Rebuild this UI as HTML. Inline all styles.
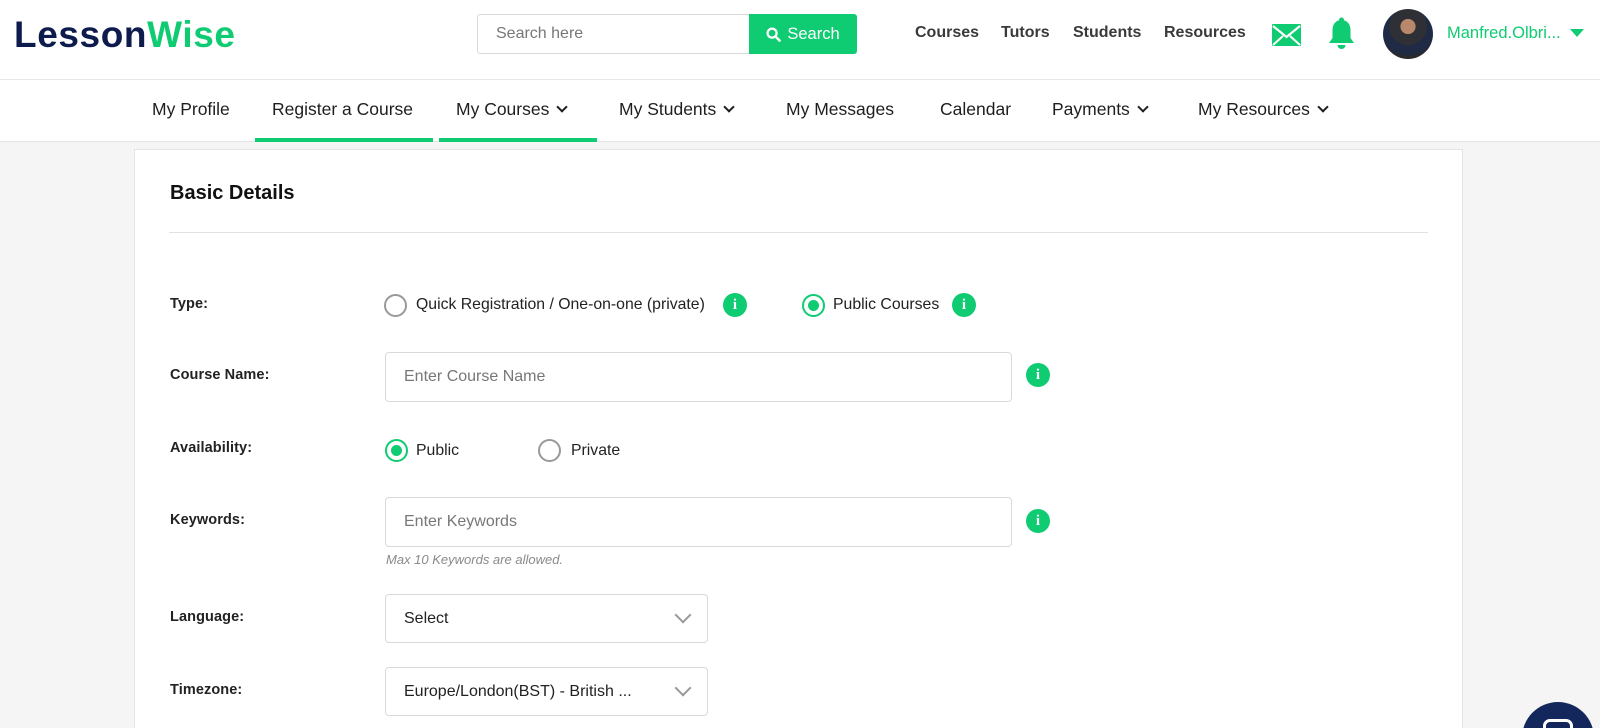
<!DOCTYPE html>
<html style="width:1600px;height:728px;overflow:hidden"><head><meta charset="utf-8"><style>
*{box-sizing:border-box;margin:0;padding:0}
body{width:1600px;height:728px;overflow:hidden;background:#f5f5f5;font-family:"Liberation Sans",Arial,sans-serif;color:#222}
#w{position:relative;width:1600px;height:728px;overflow:hidden}
.a{position:absolute}
.g{color:#0fcb72}
#hdr{left:0;top:0;width:1600px;height:80px;background:#fff;border-bottom:1px solid #e8e8e8}
#nav{left:0;top:80px;width:1600px;height:62px;background:#fff;border-bottom:1px solid #e4e4e4}
.tl{font-size:16px;font-weight:bold;color:#3a3a3a;top:24px}
.nv{font-size:17.5px;color:#1e1e1e;top:99px;white-space:nowrap}
.ul{top:138px;height:4px;background:#0fcb72}
.chev{display:inline-block;width:8px;height:8px;border-right:2px solid currentColor;border-bottom:2px solid currentColor;transform:rotate(45deg);margin-left:9px;position:relative;top:-4px}
#card{left:134px;top:149px;width:1329px;height:579px;background:#fff;border:1px solid #e4e4e4;border-bottom:none}
.lb{left:170px;font-size:14.5px;font-weight:bold;color:#222;letter-spacing:.1px}
.rd{width:23px;height:23px;border-radius:50%;border:2px solid #999;background:#fff}
.rd.on{border-color:#0fcb72}
.rd.on::after{content:"";position:absolute;left:4px;top:4px;width:11px;height:11px;border-radius:50%;background:#0fcb72}
.rt{font-size:15.8px;color:#222}
.info{width:24px;height:24px;border-radius:50%;background:#0fcb72;color:#fff;font:bold 15px "Liberation Serif",serif;text-align:center;line-height:24px}
.inp{border:1px solid #d9d9d9;border-radius:4px;background:#fff;font-size:16px;color:#777;padding-left:18px;display:flex;align-items:center}
.sel{color:#222}
.sel .dc{position:absolute;right:18px;top:14px;width:12px;height:12px;border-right:2.5px solid #999;border-bottom:2.5px solid #999;transform:rotate(45deg)}
</style></head><body><div id="w">
<div id="hdr" class="a">
 <div class="a" style="left:14px;top:14px;font-size:37px;font-weight:bold;letter-spacing:0.6px"><span style="color:#0e1b4d">Lesson</span><span class="g">Wise</span></div>
 <div class="a inp" style="left:477px;top:14px;width:273px;height:40px;border-radius:3px 0 0 3px;color:#777">Search here</div>
 <div class="a" style="left:749px;top:14px;width:108px;height:40px;background:#0fcb72;color:#fff;font-size:16.5px;display:flex;align-items:center;justify-content:center;border-radius:0 3px 3px 0">
  <svg width="15" height="15" viewBox="0 0 16 16" style="margin-right:6px"><circle cx="6.5" cy="6.5" r="4.8" fill="none" stroke="#fff" stroke-width="2.4"/><path d="M10 10l4.5 4.5" stroke="#fff" stroke-width="2.6" stroke-linecap="round"/></svg>Search</div>
 <div class="a tl" style="left:915px">Courses</div>
 <div class="a tl" style="left:1001px">Tutors</div>
 <div class="a tl" style="left:1073px">Students</div>
 <div class="a tl" style="left:1164px">Resources</div>
 <svg class="a" style="left:1272px;top:24px" width="29" height="22" viewBox="0 0 29 22"><rect x="0" y="0" width="29" height="22" rx="1" fill="#0fcb72"/><path d="M1 2l13.5 11L28 2" fill="none" stroke="#fff" stroke-width="2.2"/><path d="M1 21l10-9M28 21l-10-9" stroke="#fff" stroke-width="2"/></svg>
 <svg class="a" style="left:1328px;top:17px" width="27" height="34" viewBox="0 0 27 34"><circle cx="13.5" cy="3" r="2.5" fill="#0fcb72"/><path d="M13.5 3c-6 0-9 4.5-9 10v8L1 26h25l-3.5-5v-8c0-5.5-3-10-9-10z" fill="#0fcb72"/><path d="M9.5 28a4 4 0 0 0 8 0z" fill="#0fcb72"/></svg>
 <div class="a" style="left:1383px;top:9px;width:50px;height:50px;border-radius:50%;background:radial-gradient(circle at 50% 35%,#b9876a 0 18%,#2f3035 19% 45%,#1f2a44 46% 70%,#2a2a2e 71%)"></div>
 <div class="a g" style="left:1447px;top:24px;font-size:16.5px">Manfred.Olbri...</div>
 <div class="a" style="left:1570px;top:29px;width:0;height:0;border-left:7px solid transparent;border-right:7px solid transparent;border-top:8px solid #0fcb72"></div>
</div>
<div id="nav" class="a"></div>
<div class="a nv" style="left:152px">My Profile</div>
<div class="a nv g" style="left:272px">Register a Course</div>
<div class="a nv g" style="left:456px">My Courses<span class="chev"></span></div>
<div class="a nv" style="left:619px">My Students<span class="chev"></span></div>
<div class="a nv" style="left:786px">My Messages</div>
<div class="a nv" style="left:940px">Calendar</div>
<div class="a nv" style="left:1052px">Payments<span class="chev"></span></div>
<div class="a nv" style="left:1198px">My Resources<span class="chev"></span></div>
<div class="a ul" style="left:255px;width:178px"></div>
<div class="a ul" style="left:439px;width:158px"></div>

<div id="card" class="a"></div>
<div class="a" style="left:170px;top:182px;font-size:20px;font-weight:bold;color:#111">Basic Details</div>
<div class="a" style="left:169px;top:232px;width:1259px;height:1px;background:#e2e2e2"></div>

<div class="a lb" style="top:296px">Type:</div>
<div class="a rd" style="left:384px;top:294px"></div>
<div class="a rt" style="left:416px;top:296px">Quick Registration / One-on-one (private)</div>
<div class="a info" style="left:723px;top:293px">i</div>
<div class="a rd on" style="left:802px;top:294px"></div>
<div class="a rt" style="left:833px;top:296px">Public Courses</div>
<div class="a info" style="left:952px;top:293px">i</div>

<div class="a lb" style="top:367px">Course Name:</div>
<div class="a inp" style="left:385px;top:352px;width:627px;height:50px">Enter Course Name</div>
<div class="a info" style="left:1026px;top:363px">i</div>

<div class="a lb" style="top:440px">Availability:</div>
<div class="a rd on" style="left:385px;top:439px"></div>
<div class="a rt" style="left:416px;top:442px">Public</div>
<div class="a rd" style="left:538px;top:439px"></div>
<div class="a rt" style="left:571px;top:442px">Private</div>

<div class="a lb" style="top:512px">Keywords:</div>
<div class="a inp" style="left:385px;top:497px;width:627px;height:50px">Enter Keywords</div>
<div class="a info" style="left:1026px;top:509px">i</div>
<div class="a" style="left:386px;top:552px;font-size:13px;font-style:italic;color:#8a8a8a">Max 10 Keywords are allowed.</div>

<div class="a lb" style="top:609px">Language:</div>
<div class="a inp sel" style="left:385px;top:594px;width:323px;height:49px">Select<span class="dc"></span></div>

<div class="a lb" style="top:682px">Timezone:</div>
<div class="a inp sel" style="left:385px;top:667px;width:323px;height:49px">Europe/London(BST) - British ...<span class="dc"></span></div>

<div class="a" style="left:1516px;top:696px;width:84px;height:32px;overflow:hidden">
 <div class="a" style="left:6px;top:6px;width:72px;height:72px;border-radius:50%;background:#13275c"></div>
 <div class="a" style="left:27px;top:23px;width:30px;height:20px;border:3px solid #fff;border-radius:7px"></div>
</div>
</div></body></html>
